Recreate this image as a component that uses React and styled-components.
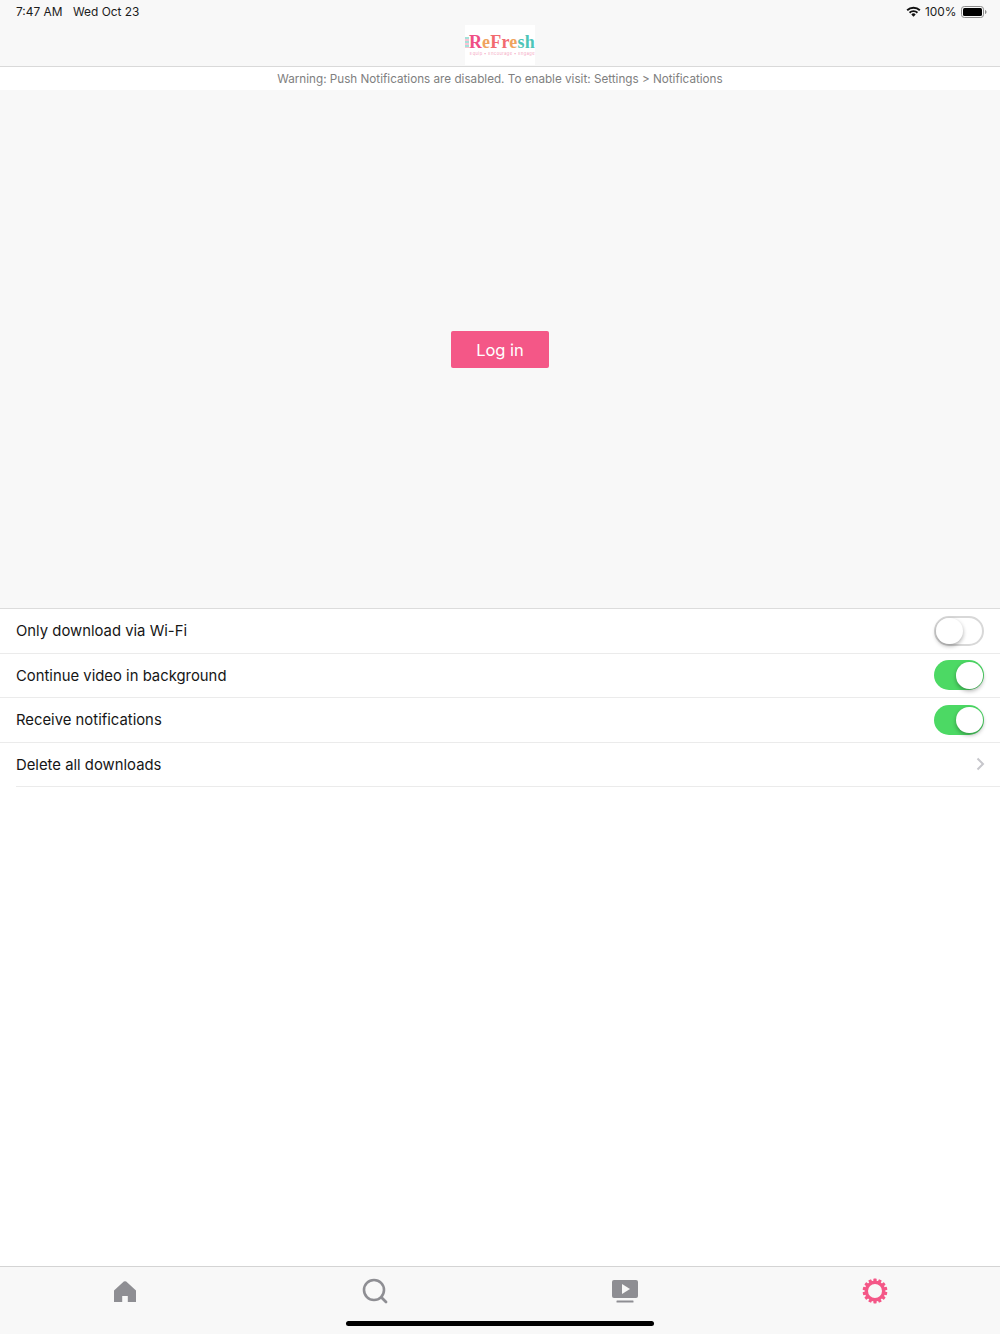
import React from 'react';
import styled, { createGlobalStyle } from 'styled-components';

const GlobalStyle = createGlobalStyle`
  html, body { margin: 0; padding: 0; background: #fff; }
  body { font-family: Inter, "Liberation Sans", sans-serif; }
`;

const Page = styled.div`
  width: 1000px;
  height: 1334px;
  display: flex;
  flex-direction: column;
  overflow: hidden;
`;

const Header = styled.header`
  height: 66px;
  flex: none;
  background: #f8f8f8;
  border-bottom: 1px solid #d9d9d9;
  display: flex;
  flex-direction: column;
`;

const StatusBar = styled.div`
  height: 23px;
  flex: none;
  padding: 0 13.5px 0 16px;
  display: flex;
  align-items: center;
  justify-content: space-between;
  font-size: 11.9px;
  color: #1c1c1c;
`;

const StatusGroup = styled.div`
  display: flex;
  align-items: center;
  gap: ${({ $gap }) => $gap}px;
`;

const LogoBar = styled.div`
  flex: 1;
  display: flex;
  justify-content: center;
`;

const Logo = styled.div`
  position: relative;
  width: 70px;
  height: 40px;
  margin-top: 2px;
  background: #fff;
  display: flex;
  flex-direction: column;
  align-items: flex-end;
  overflow: hidden;
`;

const LogoWord = styled.div`
  margin-top: 9px;
  height: 17px;
  line-height: 17px;
  font-family: "Liberation Serif", serif;
  font-weight: 700;
  font-size: 18px;
  letter-spacing: 0.2px;
  white-space: nowrap;
`;

const LogoLetter = styled.span`
  color: ${({ $color }) => $color};
`;

const LogoTag = styled.div`
  font-size: 4px;
  line-height: 6px;
  color: #f4a3bd;
  white-space: nowrap;
  letter-spacing: 0.42px;
`;

const LogoMark = styled.div`
  position: absolute;
  left: 0;
  top: 12px;
  width: 4px;
  height: 11px;
  background: repeating-linear-gradient(#7fd3c8 0 2px, #f6a8c0 2px 4px);
  opacity: 0.7;
`;

const Warning = styled.div`
  height: 23px;
  flex: none;
  background: #fff;
  display: flex;
  align-items: center;
  justify-content: center;
  font-size: 11.7px;
  color: #808080;
`;

const LoginArea = styled.div`
  height: 518px;
  flex: none;
  background: #f8f8f8;
  border-bottom: 1px solid #dcdcdc;
  display: flex;
  align-items: center;
  justify-content: center;
`;

const LoginButton = styled.button`
  width: 98px;
  height: 37px;
  margin-top: 1px;
  border: none;
  border-radius: 2px;
  background: #f45787;
  color: #fff;
  font-family: inherit;
  font-size: 16.5px;
  padding: 0;
`;

const Settings = styled.div`
  flex: 1;
  background: #fff;
`;

const Row = styled.div`
  height: 44.5px;
  box-sizing: border-box;
  margin-left: ${({ $last }) => ($last ? 16 : 0)}px;
  padding: 0 16px 0 ${({ $last }) => ($last ? 0 : 16)}px;
  border-bottom: 1px solid #ebebeb;
  display: flex;
  align-items: center;
  justify-content: space-between;
  font-size: 14.85px;
  color: #161616;
`;

const Label = styled.span`
  padding-top: 1px;
`;

const Switch = styled.div`
  position: relative;
  width: 50px;
  height: 30px;
  box-sizing: border-box;
  border-radius: 15px;
  background: ${({ $on }) => ($on ? '#4cd964' : '#fff')};
  border: ${({ $on }) => ($on ? 'none' : '2px solid #d8d8d8')};
`;

const Knob = styled.div`
  position: absolute;
  top: ${({ $on }) => ($on ? 2 : 0)}px;
  ${({ $on }) => ($on ? 'right: 1.5px;' : 'left: 0;')}
  width: 26.5px;
  height: 26.5px;
  border-radius: 50%;
  background: #fff;
  box-shadow: 0 2px 4px rgba(0, 0, 0, 0.32);
`;

const Chevron = styled.svg`
  display: block;
  margin-right: -1px;
`;

const TabBar = styled.nav`
  position: relative;
  height: 68px;
  flex: none;
  box-sizing: border-box;
  background: #f8f8f8;
  border-top: 1px solid #d4d4d4;
  display: grid;
  grid-template-columns: repeat(4, 1fr);
`;

const Tab = styled.div`
  height: 48px;
  display: flex;
  align-items: center;
  justify-content: center;
`;

const HomeIndicator = styled.div`
  position: absolute;
  left: 346px;
  bottom: 8px;
  width: 308px;
  height: 5px;
  border-radius: 3px;
  background: #000;
`;

const Wifi = () => (
  <svg width="15" height="11" viewBox="0 0 15 11">
    <path d="M0.5 3.6 A10 10 0 0 1 14.5 3.6 L13.2 5 A8.1 8.1 0 0 0 1.8 5 Z" fill="#111" />
    <path d="M2.9 6 A6.6 6.6 0 0 1 12.1 6 L10.8 7.4 A4.7 4.7 0 0 0 4.2 7.4 Z" fill="#111" />
    <path d="M5.3 8.4 A3.2 3.2 0 0 1 9.7 8.4 L7.5 10.8 Z" fill="#111" />
  </svg>
);

const Battery = () => (
  <svg width="26" height="12" viewBox="0 0 26 12">
    <rect x="0.5" y="0.5" width="22" height="11" rx="2.8" fill="none" stroke="#8c8c8c" />
    <rect x="2" y="2" width="19" height="8" rx="1.5" fill="#000" />
    <path d="M24 4 C25 4.3 25.5 5 25.5 6 C25.5 7 25 7.7 24 8 Z" fill="#8c8c8c" />
  </svg>
);

const HomeIcon = () => (
  <svg width="22" height="21" viewBox="0 0 22 21">
    <path d="M9.8 0.6 Q11 -0.2 12.2 0.6 L22 9.5 V21 H13.8 V15 H8.2 V21 H0 V9.5 Z" fill="#8e8e93" />
  </svg>
);

const SearchIcon = () => (
  <svg width="26" height="26" viewBox="0 0 26 26">
    <circle cx="12" cy="12" r="10" fill="none" stroke="#8e8e93" strokeWidth="2.6" />
    <path d="M19.5 19.5 L24 24" stroke="#8e8e93" strokeWidth="2.8" strokeLinecap="round" />
  </svg>
);

const VideoIcon = () => (
  <svg width="26" height="23" viewBox="0 0 26 23">
    <rect x="0" y="0" width="26" height="18" rx="2" fill="#8e8e93" />
    <path d="M10 4 L18 9 L10 14 Z" fill="#f8f8f8" />
    <rect x="4.5" y="20.5" width="17" height="2" rx="0.5" fill="#8e8e93" />
  </svg>
);

// gear outline: ring with a ring of small teeth round it
const GearIcon = () => {
  const teeth = Array.from({ length: 14 }, (_, i) => (i * 360) / 14);
  return (
    <svg width="26" height="26" viewBox="0 0 26 26">
      {teeth.map((angle) => (
        <rect key={angle} x="11.4" y="0.6" width="3.2" height="4" rx="0.6" fill="#f45787" transform={`rotate(${angle} 13 13)`} />
      ))}
      <circle cx="13" cy="13" r="8.7" fill="none" stroke="#f45787" strokeWidth="3.4" />
    </svg>
  );
};

const logoLetters = [
  ['R', '#ef4f86'],
  ['e', '#f0a35e'],
  ['F', '#f26a6f'],
  ['r', '#f26a6f'],
  ['e', '#f0a35e'],
  ['s', '#4ec5b8'],
  ['h', '#4ec5b8'],
];

const rows = [
  { label: 'Only download via Wi-Fi', on: false },
  { label: 'Continue video in background', on: true },
  { label: 'Receive notifications', on: true },
];

export default function App() {
  return (
    <Page>
      <GlobalStyle />
      <Header>
        <StatusBar>
          <StatusGroup $gap={10.5}>
            <span>7:47 AM</span>
            <span>Wed Oct 23</span>
          </StatusGroup>
          <StatusGroup $gap={4}>
            <Wifi />
            <span>100%</span>
            <Battery />
          </StatusGroup>
        </StatusBar>
        <LogoBar>
          <Logo>
            <LogoMark />
            <LogoWord>
              {logoLetters.map(([letter, color], i) => (
                <LogoLetter key={i} $color={color}>{letter}</LogoLetter>
              ))}
            </LogoWord>
            <LogoTag>Equip • Encourage • Engage</LogoTag>
          </Logo>
        </LogoBar>
      </Header>
      <Warning>Warning: Push Notifications are disabled. To enable visit: Settings &gt; Notifications</Warning>
      <LoginArea>
        <LoginButton>Log in</LoginButton>
      </LoginArea>
      <Settings>
        {rows.map((row) => (
          <Row key={row.label}>
            <Label>{row.label}</Label>
            <Switch $on={row.on}>
              <Knob $on={row.on} />
            </Switch>
          </Row>
        ))}
        <Row $last>
          <Label>Delete all downloads</Label>
          <Chevron width="9" height="14" viewBox="0 0 9 14">
            <path d="M1.5 1.5 L7 7 L1.5 12.5" fill="none" stroke="#c7c7cc" strokeWidth="2" />
          </Chevron>
        </Row>
      </Settings>
      <TabBar>
        <Tab><HomeIcon /></Tab>
        <Tab><SearchIcon /></Tab>
        <Tab><VideoIcon /></Tab>
        <Tab><GearIcon /></Tab>
        <HomeIndicator />
      </TabBar>
    </Page>
  );
}
